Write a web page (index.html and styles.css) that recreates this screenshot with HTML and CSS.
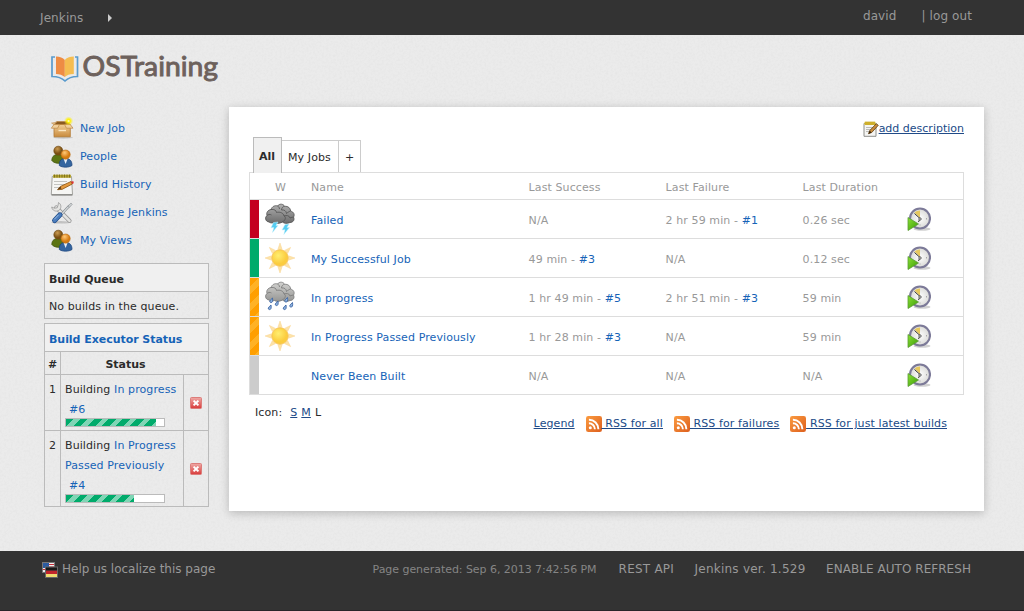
FILE: index.html
```html
<!DOCTYPE html>
<html lang="en">
<head>
<meta charset="utf-8">
<title>Dashboard [Jenkins]</title>
<link rel="stylesheet" href="styles.css">
</head>
<body>
<svg class="defs" aria-hidden="true">
  <defs>
    <linearGradient id="gBox" x1="0" y1="0" x2="0" y2="1"><stop offset="0" stop-color="#f1cf98"/><stop offset="1" stop-color="#c98b3c"/></linearGradient>
    <radialGradient id="gGlow"><stop offset="0" stop-color="#fffde0"/><stop offset=".35" stop-color="#fff200"/><stop offset="1" stop-color="#ffee20" stop-opacity="0"/></radialGradient>
    <radialGradient id="gBrown" cx=".4" cy=".3"><stop offset="0" stop-color="#c99a52"/><stop offset="1" stop-color="#7a4f12"/></radialGradient>
    <radialGradient id="gOrange" cx=".4" cy=".3"><stop offset="0" stop-color="#ffc977"/><stop offset="1" stop-color="#d67c12"/></radialGradient>
    <radialGradient id="gSun" cx=".4" cy=".35"><stop offset="0" stop-color="#ffee70"/><stop offset="1" stop-color="#fbcc3e"/></radialGradient>
    <linearGradient id="gDark" x1="0" y1="0" x2="0" y2="1"><stop offset="0" stop-color="#b0b0b0"/><stop offset="1" stop-color="#6b6b6b"/></linearGradient>
    <linearGradient id="gLight" x1="0" y1="0" x2="0" y2="1"><stop offset="0" stop-color="#d2d2d0"/><stop offset="1" stop-color="#969694"/></linearGradient>
    <linearGradient id="gRss" x1="0" y1="0" x2="1" y2="1"><stop offset="0" stop-color="#fb9b3f"/><stop offset="1" stop-color="#dd5f1e"/></linearGradient>
    <linearGradient id="gStop" x1="0" y1="0" x2="0" y2="1"><stop offset="0" stop-color="#efaaa6"/><stop offset="1" stop-color="#d83a3a"/></linearGradient>
    <linearGradient id="gPlay" x1="0" y1="0" x2="1" y2="1"><stop offset="0" stop-color="#8ae234"/><stop offset="1" stop-color="#3a9a06"/></linearGradient>
    <radialGradient id="gFace"><stop offset="0" stop-color="#fff"/><stop offset="1" stop-color="#d9d9d6"/></radialGradient>
  </defs>
  <symbol id="i-box" viewBox="0 0 24 24">
    <ellipse cx="13" cy="20.5" rx="10" ry="1.2" fill="#000" opacity=".15"/>
    <path d="M4 7.5L7 4.5H18L20 7.5Z" fill="#8a5a20" stroke="#b98342" stroke-width=".6"/>
    <path d="M4 7.5H20.3V19.8H4Z" fill="url(#gBox)" stroke="#b27a34" stroke-width=".8"/>
    <path d="M4 7.5L1.3 11.2H7.6L9.5 7.5ZM20.3 7.5L23 11.2H16.5L14.5 7.5Z" fill="#f0d09d" stroke="#bb8746" stroke-width=".7"/>
    <path d="M4 7.5L7 4.5L5 5.5L1.5 6Z" fill="#e8c48c" stroke="#b98342" stroke-width=".5"/>
    <path d="M8.5 13.5H16" stroke="#fbe7c2" stroke-width="1.4"/>
    <circle cx="18.6" cy="4" r="4.6" fill="url(#gGlow)"/>
  </symbol>
  <symbol id="i-people" viewBox="0 0 24 24">
    <path d="M1.8 15.5C2 10.500 5 9.500 8.500 9.500S14 12 14 17.500C10 19 4 18.500 1.800 15.500Z" fill="#5c7514" stroke="#40540b" stroke-width=".8"/>
    <circle cx="8.300" cy="5.700" r="4.500" fill="url(#gBrown)" stroke="#6d470f" stroke-width=".6"/>
    <path d="M9.300 20.500C9.300 15.500 11 13.500 15.500 13.500S22 16 22 20.500C19 22.700 12 22.700 9.300 20.500Z" fill="#34659f" stroke="#1d467f" stroke-width=".8"/>
    <path d="M13.600 13.800L15.600 19L17.600 13.800Z" fill="#e9eef5"/>
    <circle cx="15.600" cy="9.600" r="4.600" fill="url(#gOrange)" stroke="#b9680e" stroke-width=".6"/>
  </symbol>
  <symbol id="i-note" viewBox="0 0 24 24">
    <path d="M2.200 3.500H21.500L22.500 21.500H1.300Z" fill="#f6f6f4" stroke="#a4a4a0" stroke-width="1"/>
    <path d="M1.500 22H22.500" stroke="#83837f" stroke-width="1.200"/>
    <path d="M4 8.500H17M4 11.500H15M4 14.500H11" stroke="#c3c3bf" stroke-width="1"/>
    <path d="M3 1.700H21V4.800H3Z" fill="#b7a633"/>
    <path d="M4.500 1.500V4.500M7 1.500V4.500M9.500 1.500V4.500M12 1.500V4.500M14.500 1.500V4.500M17 1.500V4.500M19.500 1.500V4.500" stroke="#6f6316" stroke-width=".8"/>
    <path d="M7.500 16.700L10.300 13.500L21 8.500L22.300 11L12 16.400Z" fill="#e49a3f" stroke="#8b5312" stroke-width=".8"/>
    <path d="M21 8.500L23.500 8.300L23.700 10.200L22.300 11Z" fill="#dd3030"/>
    <path d="M7.500 16.700L10.300 13.500L11.500 15.600Z" fill="#5b3a14"/>
  </symbol>
  <symbol id="i-tools" viewBox="0 0 24 24">
    <ellipse cx="11" cy="21.300" rx="10" ry="1.300" fill="#000" opacity=".17"/>
    <path d="M6.300 6.500L19.500 19.800" stroke="#989898" stroke-width="4.200" stroke-linecap="round"/>
    <path d="M6.300 6.500L19.500 19.800" stroke="#e4e4e2" stroke-width="2.600" stroke-linecap="round"/>
    <path d="M8.500 1.500A4.600 4.600 0 1 1 1.700 6L4.300 7.200L7.200 6.800L8 4.500Z" fill="#e4e4e2" stroke="#989898" stroke-width=".8"/>
    <path d="M10.500 14.300L19.500 4.600" stroke="#858a8d" stroke-width="2.400"/>
    <path d="M10.500 14.300L19.500 4.600" stroke="#dfe3e5" stroke-width="1.100"/>
    <path d="M18 5L21 2L22.300 3.300L19.500 6.300Z" fill="#ccd0d2" stroke="#8c9194" stroke-width=".6"/>
    <path d="M4.600 19.500L10 13.800" stroke="#1f4c8a" stroke-width="5" stroke-linecap="round"/>
    <path d="M4.600 19.500L10 13.800" stroke="#4b7dbd" stroke-width="3.600" stroke-linecap="round"/>
    <path d="M4.300 18.300L8.600 13.800" stroke="#9bbce2" stroke-width="1"/>
  </symbol>
  <symbol id="i-cloudshape" viewBox="0 0 32 22">
    <path d="M5 19C1 18.500 .8 14 3 12.500C2 9.500 4 7 7 6.500C8 3.500 11 2 13.500 3C15.500 .3 19.500 .8 20.500 3.300C24 3 26.500 5 26.500 8C30 9 31 12 29.500 14C31 17 29 19.500 26 19.500C23 21 20 20.500 18.500 19C15 21 12 20.500 10.500 19.500C8.500 20.200 6.500 20.200 5 19Z"/>
  </symbol>
  <symbol id="i-cloudlines" viewBox="0 0 32 22">
    <path d="M7 6.500C10 6 12.500 7.500 12.500 9.500C16 8.500 19.500 10 20 13C22 13.500 22 17 18.500 19M3 12.500C4 11.500 6 11 7.500 12M20.500 3.300C19 3.500 17.500 5 17.500 7C20 6.500 22.500 8 22.500 10.500C24 9 25.500 8.500 26.500 8M13.500 3C14.500 3.500 15.500 4.500 15.500 6M20 13C22.500 12 25.500 12.500 26 15C27.500 14.500 28.500 14 29.500 14" fill="none"/>
  </symbol>
  <symbol id="i-storm" viewBox="0 0 32 32">
    <use href="#i-cloudshape" width="32" height="22" fill="url(#gDark)" stroke="#4c4c4c" stroke-width=".8"/>
    <use href="#i-cloudlines" width="32" height="22" stroke="#505050" stroke-width=".8"/>
    <path d="M9.500 19.500L14 19L12 22.500H14L8.500 29.500L9.800 24.600L7 24.800ZM21 21.500L25 21L23 24.600H25.500L19.800 31.500L21 26.700L18 27Z" fill="#55cdf2" stroke="#c8f0fb" stroke-width=".5"/>
  </symbol>
  <symbol id="i-rain" viewBox="0 0 32 32">
    <use href="#i-cloudshape" width="32" height="22" fill="url(#gLight)" stroke="#777" stroke-width=".8"/>
    <use href="#i-cloudlines" width="32" height="22" stroke="#7d7d7d" stroke-width=".9"/>
    <g fill="#8db2de" stroke="#3e66a5" stroke-width=".9">
      <path id="drop" d="M8.500 17Q9.300 21.800 6.800 21.600Q4 20.800 8.500 17Z"/>
      <use href="#drop" x="5.500" y="3"/><use href="#drop" x="-1.500" y="7"/><use href="#drop" x="15" y="-.5"/><use href="#drop" x="20" y="4.500"/><use href="#drop" x="13.500" y="7"/>
    </g>
  </symbol>
  <symbol id="i-sun" viewBox="0 0 32 32">
    <g fill="#fde3a8" stroke="#f9d595" stroke-width=".5">
      <path id="ray" d="M16 1L13.800 7.500H18.200Z"/>
      <use href="#ray" transform="rotate(45 16 16)"/><use href="#ray" transform="rotate(90 16 16)"/><use href="#ray" transform="rotate(135 16 16)"/><use href="#ray" transform="rotate(180 16 16)"/><use href="#ray" transform="rotate(225 16 16)"/><use href="#ray" transform="rotate(270 16 16)"/><use href="#ray" transform="rotate(315 16 16)"/>
    </g>
    <circle cx="16" cy="16" r="8.200" fill="url(#gSun)" stroke="#f6c253" stroke-width=".8"/>
  </symbol>
  <symbol id="i-clock" viewBox="0 0 24 24">
    <ellipse cx="15" cy="22" rx="8.500" ry="1.700" fill="#000" opacity=".18"/>
    <circle cx="13" cy="11.500" r="10" fill="url(#gFace)" stroke="#7c7a98" stroke-width="2.100"/>
    <path d="M13 11L7.500 5.500A8 8 0 0 1 13 3.500Z" fill="#e6c85e"/>
    <path d="M7.500 6.500L13 11.500L11.500 15" fill="none" stroke="#333" stroke-width="1"/>
    <circle cx="13" cy="12" r="1.200" fill="#fff" stroke="#333" stroke-width=".8"/>
    <path d="M19.500 11V12.500M13 17.500V18.500" stroke="#999" stroke-width=".8"/>
    <path d="M1 10.500L11.500 17L1 23.500Z" fill="url(#gPlay)" stroke="#5b9a36" stroke-width=".8"/>
  </symbol>
  <symbol id="i-rss" viewBox="0 0 16 16">
    <rect width="16" height="16" rx="2.300" fill="url(#gRss)"/>
    <circle cx="4.300" cy="11.800" r="1.500" fill="#fff"/>
    <path d="M2.900 7.300A6 6 0 0 1 8.900 13.200M2.900 3.800A9.400 9.400 0 0 1 12.400 13.200" fill="none" stroke="#fff" stroke-width="1.900"/>
  </symbol>
  <symbol id="i-stop" viewBox="0 0 12 12">
    <rect x=".5" y=".5" width="11" height="11" rx="1" fill="url(#gStop)" stroke="#dc7d7a" stroke-width="1"/>
    <path d="M3.600 3.600L8.400 8.400M8.400 3.600L3.600 8.400" stroke="#fff" stroke-width="2"/>
  </symbol>
</svg>

<header class="top">
  <nav class="crumbs"><a>Jenkins</a><i class="arrow"></i></nav>
  <div class="login"><a>david</a><span>| log out</span></div>
</header>

<div class="page">
  <svg class="paper" aria-hidden="true"><filter id="grain"><feTurbulence type="fractalNoise" baseFrequency=".45" numOctaves="3" seed="4"/><feColorMatrix values="0 0 0 0 .5  0 0 0 0 .5  0 0 0 0 .5  .35 0 0 0 -.13"/></filter><rect width="100%" height="100%" filter="url(#grain)"/></svg>
  <aside class="side">
    <svg class="logo" width="170" height="34" viewBox="0 0 170 34">
      <path d="M4 6H1V25.500C7 25.500 11 27 14 30C17 27 21 25.500 26.500 25.500V6H24" fill="none" stroke="#5a9bcd" stroke-width="1.700"/>
      <path d="M5 5.500C9 5.500 12 7 13.800 9V26C11 23.800 9 23.300 5 23Z" fill="#ee8c44"/>
      <path d="M22.800 5.500C18.500 5.500 15.500 7 13.800 9V26C16 23.800 18.500 23.300 22.800 23Z" fill="#f5bd50"/>
      <text class="wordmark" x="31.500" y="25.300" textLength="135.500" lengthAdjust="spacingAndGlyphs">OSTraining</text>
    </svg>
    <nav class="tasks">
      <a><svg><use href="#i-box"/></svg>New Job</a>
      <a><svg><use href="#i-people"/></svg>People</a>
      <a><svg><use href="#i-note"/></svg>Build History</a>
      <a><svg><use href="#i-tools"/></svg>Manage Jenkins</a>
      <a><svg><use href="#i-people"/></svg>My Views</a>
    </nav>
    <section class="pane queue">
      <h2>Build Queue</h2>
      <p>No builds in the queue.</p>
    </section>
    <section class="pane">
      <h2><a>Build Executor Status</a></h2>
      <div class="exec head"><b>#</b><b class="wide">Status</b></div>
      <div class="exec first">
        <span>1</span>
        <div class="job">Building <a>In progress</a><br><a class="num">#6</a><div class="bar"><i style="width:90px"></i></div></div>
        <div class="stop"><svg><use href="#i-stop"/></svg></div>
      </div>
      <div class="exec second">
        <span>2</span>
        <div class="job">Building <a>In Progress<br>Passed Previously</a><br><a class="num">#4</a><div class="bar"><i style="width:68px"></i></div></div>
        <div class="stop"><svg><use href="#i-stop"/></svg></div>
      </div>
    </section>
  </aside>

  <main class="panel">
    <div class="describe"><svg viewBox="0 0 16 16"><path d="M1 2.500H13V15.300H1Z" fill="#f5f5f3" stroke="#8e8e8a"/><path d="M3 6.500H10M3 8.500H8M3 10.500H7" stroke="#bcbcb8"/><path d="M1.500 .8H12.500V4H1.500Z" fill="#e7c93c"/><path d="M3 .5V4M5 .5V4M7 .5V4M9 .5V4M11 .5V4" stroke="#a98a15" stroke-width=".8"/><path d="M5.500 12.700L6.800 9.500L13.300 2.700L15.300 4.300L8.700 11.500Z" fill="#c98c3c" stroke="#5d3d12" stroke-width=".8"/><path d="M5.500 12.700L6.800 9.800L8.500 11.500Z" fill="#332108"/></svg><a>add description</a></div>
    <div class="tabs"><b>All</b><span>My Jobs</span><span class="plus">+</span></div>
    <div class="grid">
      <div class="row titles"><i></i><span class="w">W</span><span>Name</span><span>Last Success</span><span>Last Failure</span><span>Last Duration</span></div>
      <div class="row"><i class="red"></i><svg class="wx"><use href="#i-storm"/></svg><a>Failed</a><span>N/A</span><span>2 hr 59 min - <a>#1</a></span><span>0.26 sec</span><svg class="run"><use href="#i-clock"/></svg></div>
      <div class="row"><i class="green"></i><svg class="wx"><use href="#i-sun"/></svg><a>My Successful Job</a><span>49 min - <a>#3</a></span><span>N/A</span><span>0.12 sec</span><svg class="run"><use href="#i-clock"/></svg></div>
      <div class="row"><i class="busy"></i><svg class="wx"><use href="#i-rain"/></svg><a>In progress</a><span>1 hr 49 min - <a>#5</a></span><span>2 hr 51 min - <a>#3</a></span><span>59 min</span><svg class="run"><use href="#i-clock"/></svg></div>
      <div class="row"><i class="busy"></i><svg class="wx"><use href="#i-sun"/></svg><a>In Progress Passed Previously</a><span>1 hr 28 min - <a>#3</a></span><span>N/A</span><span>59 min</span><svg class="run"><use href="#i-clock"/></svg></div>
      <div class="row"><i class="idle"></i><span class="wx"></span><a>Never Been Built</a><span>N/A</span><span>N/A</span><span>N/A</span><svg class="run"><use href="#i-clock"/></svg></div>
    </div>
    <div class="sizes"><span>Icon:</span><a>S</a><a>M</a><span>L</span></div>
    <div class="feeds">
      <a>Legend</a>
      <a><svg><use href="#i-rss"/></svg><span>&nbsp;RSS for all</span></a>
      <a><svg><use href="#i-rss"/></svg><span>&nbsp;RSS for failures</span></a>
      <a><svg><use href="#i-rss"/></svg><span>&nbsp;RSS for just latest builds</span></a>
    </div>
  </main>
</div>

<footer class="foot">
  <svg class="flags" viewBox="0 0 16 16"><rect x="0" y="0" width="13" height="11" fill="#777"/><path d="M1 1H12V10H1Z" fill="#eee"/><path d="M1 2.500H12M1 5H12M1 7.500H12" stroke="#cc2a36"/><path d="M1 1H7V6H1Z" fill="#2d5ca0"/><rect x="3" y="4.500" width="13" height="11.500" fill="#666"/><path d="M4 5.500H15V8.700H4Z" fill="#191919"/><path d="M4 8.700H15V12H4Z" fill="#c2252c"/><path d="M4 12H15V15H4Z" fill="#efdc70"/></svg>
  <a class="help">Help us localize this page</a>
  <span class="gen">Page generated: Sep 6, 2013 7:42:56 PM</span>
  <a class="rest">REST API</a>
  <a class="ver">Jenkins ver. 1.529</a>
  <a class="auto">ENABLE AUTO REFRESH</a>
</footer>
</body>
</html>
```

FILE: styles.css
```css
* { box-sizing: border-box; }
body {
  margin: 0;
  height: 611px;
  overflow: hidden;
  background: #333;
  color: #2b2b2b;
  font: 11px/20px "DejaVu Sans", Verdana, sans-serif;
  letter-spacing: .1px;
}
.defs { position: absolute; width: 0; height: 0; }
svg { display: block; flex: none; }
a { color: #1663b7; }
b, h2 { letter-spacing: -.04px; }

.top {
  height: 35px;
  background: #333;
  color: #999;
  font-size: 12px;
  display: flex;
  justify-content: space-between;
  padding: 0 52px 0 40px;
}
.top a, .foot a { color: #999; }
.crumbs { display: flex; align-items: center; line-height: 34px; padding-top: 1px; }
.arrow {
  margin-left: 25px;
  border: solid transparent;
  border-width: 4px 0 4px 4px;
  border-left-color: #ccc;
}
.login { display: flex; gap: 25px; line-height: 32px; }

.page {
  position: relative;
  height: 516px;
  background: #ebebeb;
  display: flex;
  padding: 0 40px 0 44px;
}
.paper { position: absolute; inset: 0; width: 100%; height: 100%; opacity: .55; }
.side { position: relative; width: 165px; margin-right: 20px; flex: none; }
.logo { margin: 16px 0 0 7px; overflow: visible; }
.wordmark { font: 400 26px Lato, sans-serif; fill: #6d615c; stroke: #6d615c; stroke-width: .9px; letter-spacing: 0; }

.tasks { padding: 30px 0 0 6px; }
.tasks a { display: flex; align-items: center; height: 28px; gap: 6px; }
.tasks svg { width: 24px; height: 24px; }

.pane { border: 1px solid #bbb; margin-top: 4px; }
.queue { margin-top: 8px; }
.pane h2 {
  margin: 0;
  padding: 5px 4px 0;
  height: 27px;
  font-size: 11px;
  line-height: 22px;
  background: #f0f0f0;
}
.pane p { margin: 0; padding: 5px 4px 1px; height: 27px; border-top: 1px solid #bbb; }
.exec { display: grid; grid-template-columns: 15px 123px 25px; border-top: 1px solid #bbb; }
.exec > * { padding: 5px 0 0 4px; }
.exec > * + * { border-left: 1px solid #bbb; }
.exec.head { height: 23px; line-height: 16px; }
.exec.head b:first-child { padding-left: 3px; }
.exec.head .wide { grid-column: 2 / 4; padding-right: 22px; text-align: center; }
.first { height: 56px; }
.second { height: 76px; }
.job { white-space: nowrap; }
.num { margin-left: 4px; }
.exec .stop { display: flex; align-items: center; padding: 1px 0 0 6px; }
.stop svg { width: 12px; height: 12px; }
.bar { width: 100px; height: 9px; border: 1px solid #bbb; background: #fff; margin-top: -2px; }
.bar i {
  display: block;
  height: 7px;
  background: repeating-linear-gradient(135deg, #00ab6b 0 5.5px, #80d5b5 5.5px 10px);
}

.panel {
  position: relative;
  margin-top: 72px;
  width: 755px;
  height: 404px;
  padding: 12px 20px 0;
  background: #fff;
  box-shadow: 0 2px 9px rgba(0, 0, 0, .22);
}
.describe { display: flex; justify-content: flex-end; height: 18px; letter-spacing: 0; }
.describe svg { width: 16px; height: 16px; margin-top: 2px; }
.describe a, .sizes a, .feeds a { color: #204a87; text-decoration: underline; }
.tabs { display: flex; align-items: flex-end; height: 35px; padding-left: 4px; line-height: 31px; }
.tabs > * { height: 32px; border: 1px solid #ccc; border-bottom: 0; border-left: 0; padding: 1px 6px 0; }
.tabs b { height: 36px; padding: 3px 5px 0; background: #f0f0f0; border: 1px solid #bbb; border-bottom: 0; width: 29px; margin-bottom: -1px; }
.tabs span:nth-child(2) { width: 57px; }
.tabs .plus { width: 22px; }

.grid { border: 1px solid #ddd; color: #999; }
.row {
  display: grid;
  grid-template-columns: 10px 51px 217.6px 137px 137px 105.4px 1fr;
  align-items: center;
  height: 39px;
  border-top: 1px solid #ddd;
}
.row > a, .row > span { padding-top: 3px; }
.row.titles { height: 26px; border-top: 0; }
.w { padding-left: 15px; }
.wx { width: 32px; height: 32px; margin-left: 4px; }
.run { width: 24px; height: 24px; margin-left: -1px; }
.row > i { height: 100%; width: 9px; }
.red { background: #c4001f; }
.green { background: #00ab6b; }
.busy { background: repeating-linear-gradient(135deg, #ff9f00 0 6px, #ffb225 6px 12px); }
.idle { background: #ccc; }

.sizes { display: flex; gap: 4px; padding: 8px 0 0 6px; height: 18px; }
.sizes span:first-child { margin-right: 4px; }
.feeds { display: flex; justify-content: flex-end; gap: 11px; padding: 1px 17px 0 0; }
.feeds a { display: flex; }
.feeds svg { width: 16px; height: 16px; margin-top: 2px; }
.feeds span { text-decoration: underline; }

.foot {
  height: 60px;
  border-bottom: 1px solid #292529;
  color: #999;
  display: flex;
  padding: 8px 53px 0 42px;
  font-size: 12px;
  letter-spacing: 0;
}
.flags { width: 16px; height: 16px; margin: 3px 4px 0 0; }
.help { margin-right: auto; }
.gen { font-size: 11px; color: #858585; margin-right: 22px; padding-top: 1px; letter-spacing: -.05px; }
.rest, .ver { margin-right: 20.5px; letter-spacing: .23px; }
.auto { letter-spacing: .05px; }
```
